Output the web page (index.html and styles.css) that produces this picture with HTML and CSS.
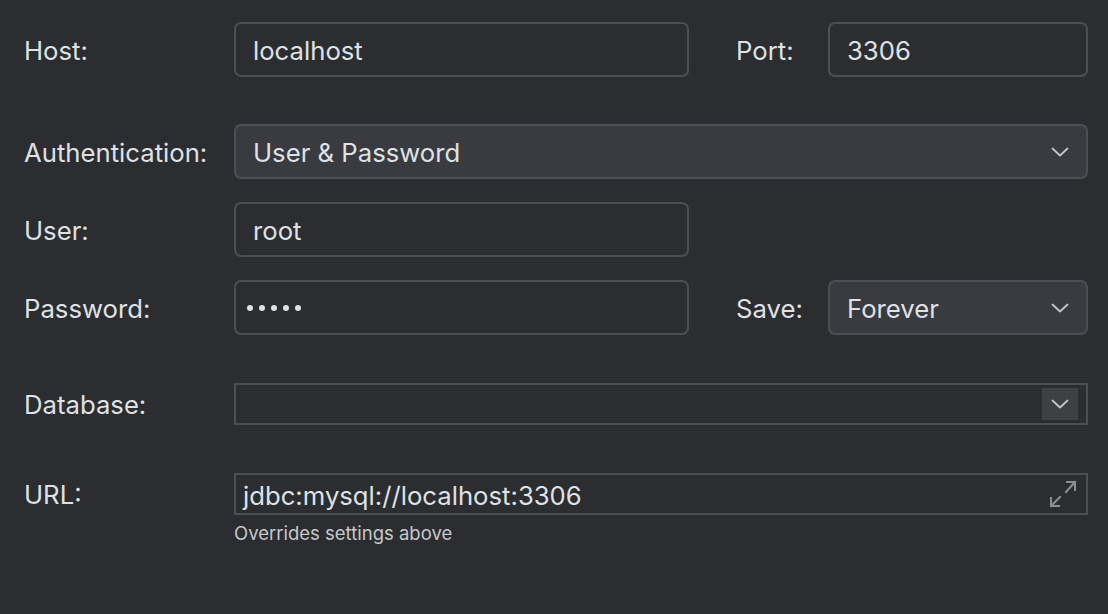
FILE: index.html
```html
<!DOCTYPE html>
<html>
<head>
<meta charset="utf-8">
<link rel="stylesheet" href="styles.css">
</head>
<body>
<div class="form">
  <div class="row row-host">
    <label class="lbl">Host:</label>
    <div class="input half">localhost</div>
    <label class="lbl lbl-side">Port:</label>
    <div class="input side">3306</div>
  </div>
  <div class="row row-auth">
    <label class="lbl">Authentication:</label>
    <div class="select full">
      <span>User &amp; Password</span>
      <svg class="chev" width="18" height="10" viewBox="0 0 18 10"><path d="M1.5 1.5 L9 8.5 L16.5 1.5" fill="none" stroke="#c3c6cb" stroke-width="1.8" stroke-linecap="round" stroke-linejoin="round"/></svg>
    </div>
  </div>
  <div class="row row-user">
    <label class="lbl">User:</label>
    <div class="input half">root</div>
  </div>
  <div class="row row-pass">
    <label class="lbl">Password:</label>
    <div class="input half dots"><i></i><i></i><i></i><i></i><i></i></div>
    <label class="lbl lbl-side">Save:</label>
    <div class="select side">
      <span>Forever</span>
      <svg class="chev" width="18" height="10" viewBox="0 0 18 10"><path d="M1.5 1.5 L9 8.5 L16.5 1.5" fill="none" stroke="#c3c6cb" stroke-width="1.8" stroke-linecap="round" stroke-linejoin="round"/></svg>
    </div>
  </div>
  <div class="row row-db">
    <label class="lbl">Database:</label>
    <div class="combo full">
      <span class="combo-text"></span>
      <div class="combo-btn">
        <svg width="18" height="10" viewBox="0 0 18 10"><path d="M1.5 1.5 L9 8.5 L16.5 1.5" fill="none" stroke="#c3c6cb" stroke-width="1.8" stroke-linecap="round" stroke-linejoin="round"/></svg>
      </div>
    </div>
  </div>
  <div class="row row-url">
    <label class="lbl">URL:</label>
    <div class="url-col">
      <div class="combo url">
        <span class="combo-text">jdbc:mysql://localhost:3306</span>
        <svg class="expand" width="30" height="30" viewBox="0 0 30 30">
          <g fill="none" stroke="#8b8e93" stroke-width="2" stroke-linecap="square">
            <path d="M18 13 L27 3"/>
            <path d="M19 3 L27 3 L27 11"/>
            <path d="M12 18 L3 27"/>
            <path d="M3 19 L3 27 L11 27"/>
          </g>
        </svg>
      </div>
      <div class="hint">Overrides settings above</div>
    </div>
  </div>
</div>
</body>
</html>
```

FILE: styles.css
```css
html, body {
  margin: 0;
  padding: 0;
  background: #2b2d30;
}
body {
  width: 1108px;
  height: 614px;
  overflow: hidden;
  font-family: Inter, "Liberation Sans", sans-serif;
  color: #dfe1e5;
}
.form {
  padding: 22px 20px 0 24px;
  display: flex;
  flex-direction: column;
}
.row {
  display: flex;
  align-items: center;
}
.row-auth { margin-top: 47px; }
.row-user { margin-top: 23px; }
.row-pass { margin-top: 23px; }
.row-db { margin-top: 48px; }
.row-url { margin-top: 48px; align-items: flex-start; }
.lbl {
  width: 210px;
  flex: none;
  font-size: 25.7px;
  line-height: 30px;
  padding-top: 2px;
  color: #dfe1e5;
}
.lbl-side {
  width: 92px;
  margin-left: 47px;
}
.input, .select {
  box-sizing: border-box;
  height: 55px;
  border: 2px solid #4c4f54;
  border-radius: 7px;
  padding: 2px 17px 0 17px;
  display: flex;
  align-items: center;
  font-size: 25.7px;
  color: #dfe1e5;
  background: #2b2d30;
}
.select {
  background: #393b40;
  justify-content: space-between;
}
.select .chev { margin-top: -2px; }
.half { width: 455px; flex: none; }
.side { flex: 1; }
.full { flex: 1; }
.dots { gap: 6px; padding-left: 11px; padding-top: 0; }
.dots i {
  width: 6px;
  height: 6px;
  border-radius: 50%;
  background: #dfe1e5;
  display: block;
}
.combo {
  box-sizing: border-box;
  height: 42px;
  border: 2px solid #4c4f54;
  display: flex;
  align-items: center;
  justify-content: space-between;
}
.combo-text {
  font-size: 25.7px;
  padding-left: 7px;
  padding-top: 2px;
  color: #dfe1e5;
}
.combo-btn {
  width: 36px;
  height: 32px;
  margin-right: 8px;
  background: #3e4044;
  display: flex;
  align-items: center;
  justify-content: center;
}
.row-db .lbl, .row-url .lbl { line-height: 40px; }
.url-col {
  flex: 1;
  display: flex;
  flex-direction: column;
}
.expand { margin-right: 8px; }
.hint {
  margin-top: 7px;
  font-size: 18.5px;
  line-height: 22px;
  color: #c6c8cc;
}
```
